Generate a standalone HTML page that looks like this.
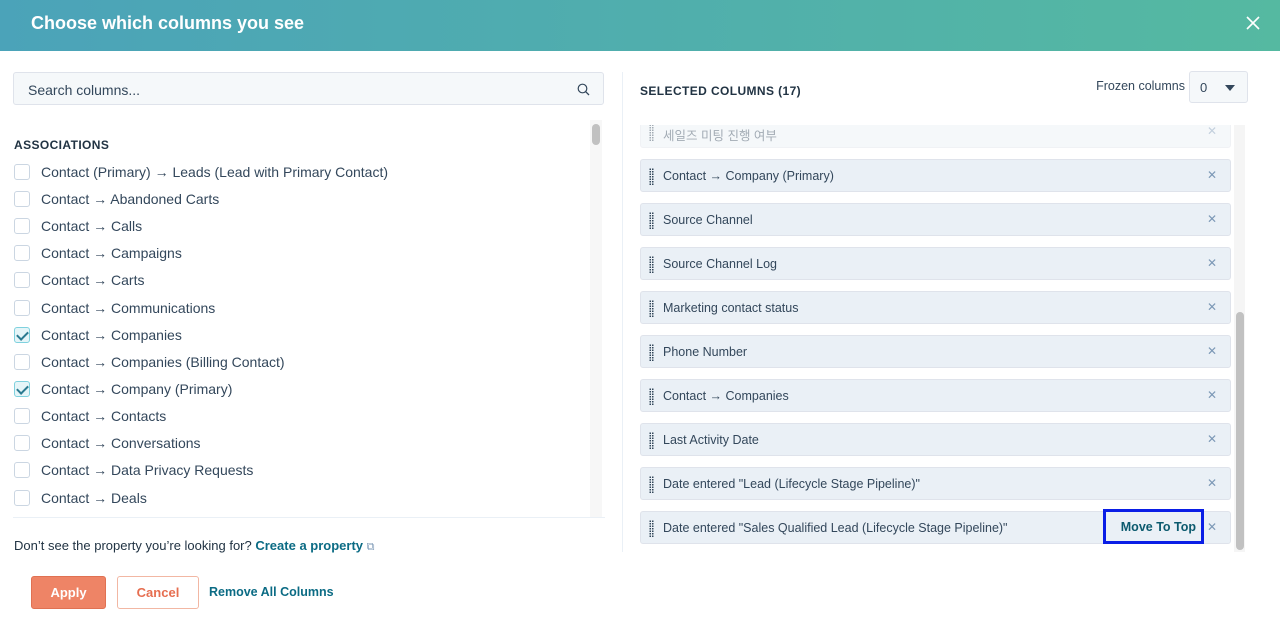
<!DOCTYPE html>
<html><head><style>
body{margin:0;width:1280px;height:629px;overflow:hidden;background:#fff;font-family:"Liberation Sans","Noto Sans CJK KR",sans-serif;color:#33475b;position:relative}
.hdr{position:absolute;left:0;top:0;width:1280px;height:51px;background:linear-gradient(90deg,#4ba3b9,#55b9a1)}
.hdr h1{position:absolute;left:31px;top:13px;margin:0;font-size:18px;color:#fff;font-weight:bold}
.search{position:absolute;left:13px;top:72px;width:591px;height:33px;border:1px solid #dfe3eb;background:#f5f8fa;border-radius:3px;box-sizing:border-box}
.search span{position:absolute;left:14px;top:9px;font-size:14px;color:#33475b}
.list{position:absolute;left:13px;top:120px;width:592px;height:397px;background:#fff;overflow:hidden;border-bottom:1px solid #eaf0f6}
.lsb{position:absolute;left:577px;top:0;width:12px;height:397px;background:#f7f7f7}
.lsb div{position:absolute;left:2px;top:4px;width:8px;height:21px;background:#c1c1c1;border-radius:4px}
.assoc{position:absolute;left:1px;top:18px;font-size:12px;font-weight:bold;letter-spacing:.4px;color:#213343}
.it{position:absolute;left:1px;font-size:14px;color:#33475b;height:20px}
.cb{position:absolute;left:0;top:0;width:16px;height:16px;border:1px solid #cbd6e2;border-radius:3px;background:#fff;box-sizing:border-box}
.cb.on{background:#e5f5f8;border-color:#7fd1de}
.cb.on:after{content:"";position:absolute;left:4px;top:1px;width:5px;height:9px;border:solid #2b7a90;border-width:0 2.5px 2.5px 0;transform:rotate(45deg)}
.it span{position:absolute;left:27px;top:0;white-space:nowrap}
.divider{position:absolute;left:622px;top:72px;width:1px;height:480px;background:#eaf0f6}
.sel{position:absolute;left:640px;top:84px;font-size:12px;font-weight:bold;letter-spacing:.4px;color:#213343}
.frz{position:absolute;right:95px;top:79px;font-size:12.5px}
.dd{position:absolute;left:1189px;top:71px;width:59px;height:32px;border:1px solid #dfe3eb;border-radius:3px;background:#f5f8fa;box-sizing:border-box;font-size:13px}
.dd span{position:absolute;left:10px;top:8px}
.dd i{position:absolute;right:12px;top:13px;border:5px solid transparent;border-top:6px solid #33475b;border-bottom:0}
.rl{position:absolute;left:640px;top:125px;width:608px;height:427px;overflow:hidden}
.rsb{position:absolute;left:594px;top:0;width:11px;height:427px;background:#f5f5f5}
.rsb div{position:absolute;left:2px;top:187px;width:8px;height:238px;background:#c1c1c1;border-radius:4px}
.ri{position:absolute;left:0;width:591px;height:33px;background:#eaf0f6;border:1px solid #dfe3eb;box-sizing:border-box;border-radius:3px;font-size:12.5px}
.ri .g{position:absolute;left:8px;top:8px;width:5px;height:17px;background-image:radial-gradient(circle,#33475b 0.8px,transparent 1px);background-size:2.5px 2.5px}
.ri span{position:absolute;left:22px;top:9px;white-space:nowrap}
.ri b{position:absolute;right:13px;top:8px;font-weight:normal;font-size:12px;color:#7c98b6}
.note{position:absolute;left:14px;top:538px;font-size:13px;color:#213343}
.note a{color:#0b6b84;font-weight:bold;text-decoration:none}
.btn{position:absolute;top:576px;height:33px;border-radius:3px;box-sizing:border-box;font-size:13px;font-weight:bold;text-align:center;line-height:31px}
</style></head><body>
<div class="hdr"><h1>Choose which columns you see</h1>
<svg style="position:absolute;left:1246px;top:16px" width="14" height="14" viewBox="0 0 14 14"><path d="M1 1L13 13M13 1L1 13" stroke="#fff" stroke-width="1.6"/></svg></div>
<div class="search"><span>Search columns...</span>
<svg style="position:absolute;right:13px;top:10px" width="13" height="13" viewBox="0 0 13 13"><circle cx="5.5" cy="5.5" r="4.3" fill="none" stroke="#33475b" stroke-width="1.2"/><path d="M8.6 8.6L12 12" stroke="#33475b" stroke-width="1.3"/></svg></div>
<div class="list">
<div class="lsb"><div></div></div>
<div class="assoc">ASSOCIATIONS</div>
<div class="it" style="top:44px"><div class="cb"></div><span>Contact (Primary) → Leads (Lead with Primary Contact)</span></div>
<div class="it" style="top:71px"><div class="cb"></div><span>Contact → Abandoned Carts</span></div>
<div class="it" style="top:98px"><div class="cb"></div><span>Contact → Calls</span></div>
<div class="it" style="top:125px"><div class="cb"></div><span>Contact → Campaigns</span></div>
<div class="it" style="top:152px"><div class="cb"></div><span>Contact → Carts</span></div>
<div class="it" style="top:180px"><div class="cb"></div><span>Contact → Communications</span></div>
<div class="it" style="top:207px"><div class="cb on"></div><span>Contact → Companies</span></div>
<div class="it" style="top:234px"><div class="cb"></div><span>Contact → Companies (Billing Contact)</span></div>
<div class="it" style="top:261px"><div class="cb on"></div><span>Contact → Company (Primary)</span></div>
<div class="it" style="top:288px"><div class="cb"></div><span>Contact → Contacts</span></div>
<div class="it" style="top:315px"><div class="cb"></div><span>Contact → Conversations</span></div>
<div class="it" style="top:342px"><div class="cb"></div><span>Contact → Data Privacy Requests</span></div>
<div class="it" style="top:370px"><div class="cb"></div><span>Contact → Deals</span></div>
</div>
<div class="divider"></div>
<div class="sel">SELECTED COLUMNS (17)</div>
<div class="frz">Frozen columns</div>
<div class="dd"><span>0</span><i></i></div>
<div class="rl">
<div class="rsb"><div></div></div>
<div class="ri" style="top:-10px;opacity:.45"><div class="g"></div><span>세일즈 미팅 진행 여부</span><b>✕</b></div>
<div class="ri" style="top:34px"><div class="g"></div><span>Contact → Company (Primary)</span><b>✕</b></div>
<div class="ri" style="top:78px"><div class="g"></div><span>Source Channel</span><b>✕</b></div>
<div class="ri" style="top:122px"><div class="g"></div><span>Source Channel Log</span><b>✕</b></div>
<div class="ri" style="top:166px"><div class="g"></div><span>Marketing contact status</span><b>✕</b></div>
<div class="ri" style="top:210px"><div class="g"></div><span>Phone Number</span><b>✕</b></div>
<div class="ri" style="top:254px"><div class="g"></div><span>Contact → Companies</span><b>✕</b></div>
<div class="ri" style="top:298px"><div class="g"></div><span>Last Activity Date</span><b>✕</b></div>
<div class="ri" style="top:342px"><div class="g"></div><span>Date entered "Lead (Lifecycle Stage Pipeline)"</span><b>✕</b></div>
<div class="ri" style="top:386px"><div class="g"></div><span>Date entered "Sales Qualified Lead (Lifecycle Stage Pipeline)"</span><b>✕</b>
<div style="position:absolute;left:462px;top:-3px;width:101px;height:35px;border:3px solid #0a1ee6;box-sizing:border-box;background:#eaf0f6;color:#0b5a6e;font-weight:bold;font-size:12.5px;text-align:right;padding-right:5px;line-height:30px">Move To Top</div></div>
</div>
<div class="note">Don’t see the property you’re looking for? <a>Create a property</a> <span style="color:#7c98b6;font-size:11px">⧉</span></div>
<div class="btn" style="left:31px;width:75px;background:#ee8466;border:1px solid #e07152;color:#fff">Apply</div>
<div class="btn" style="left:117px;width:82px;background:#fff;border:1px solid #f2b7a3;color:#e66e50">Cancel</div>
<div class="btn" style="left:209px;color:#0b6b84;font-size:12.5px;top:577px">Remove All Columns</div>
</body></html>
